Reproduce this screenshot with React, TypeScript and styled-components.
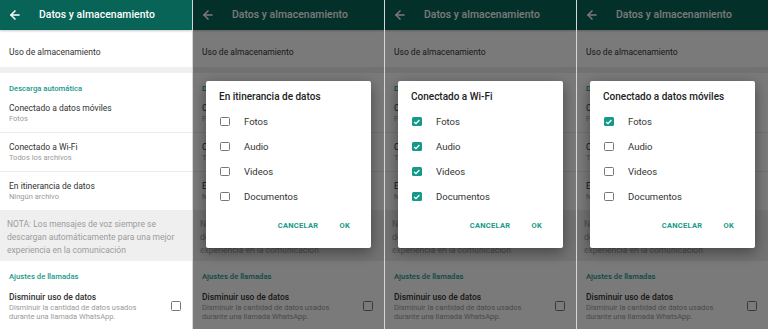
import React from "react";
import styled, { createGlobalStyle } from "styled-components";
import { ArrowLeft } from "lucide-react";

const GlobalStyle = createGlobalStyle`
  html, body { margin: 0; padding: 0; background: #dcdcdc; }
  body { font-family: Roboto, "Noto Sans", Arial, sans-serif; -webkit-font-smoothing: antialiased; }
  * { box-sizing: border-box; }
`;

const TEAL = "#17998a";

const Strip = styled.div`
  display: grid;
  grid-template-columns: 192px repeat(3, 191px);
  column-gap: 1px;
  width: 768px;
  height: 329px;
  overflow: hidden;
  background: #d6d6d6;
`;

const Phone = styled.div`
  position: relative;
  height: 329px;
  overflow: hidden;
  background: #fff;
`;

const Header = styled.header`
  position: relative;
  z-index: 1;
  height: 30px;
  display: flex;
  align-items: center;
  padding-left: 8px;
  background: #086457;
  color: #fff;
  box-shadow: 0 1px 2px rgba(0, 0, 0, 0.22);
`;

const HeaderTitle = styled.h1`
  margin: 0 0 0 17px;
  font-size: 10.4px;
  font-weight: 500;
  line-height: 14px;
  letter-spacing: 0.05px;
`;

const StorageRow = styled.div`
  padding: 16px 9px 9px;
  font-size: 8.5px;
  line-height: 12px;
  color: #333;
`;

const Band = styled.div`
  height: 6px;
  background: #efefef;
`;

const SectionTitle = styled.div`
  padding: 11px 9px 0;
  font-size: 7.7px;
  line-height: 10px;
  font-weight: 500;
  color: ${TEAL};
`;

const Item = styled.div<{ $last?: boolean }>`
  padding: 8px 9px;
  border-bottom: ${(p) => (p.$last ? "none" : "1px solid #ebebeb")};
`;

const ItemTitle = styled.div<{ $strong?: boolean }>`
  font-size: 8.5px;
  line-height: 12px;
  color: #333;
  font-weight: ${(p) => (p.$strong ? 500 : 400)};
`;

const ItemSub = styled.div`
  font-size: 7.5px;
  line-height: 10px;
  color: #9a9a9a;
`;

const Note = styled.div`
  background: #efefef;
  padding: 8px 8px 4px 7px;
  font-size: 8.5px;
  line-height: 13px;
  color: #9c9c9c;
`;

const ToggleRow = styled.div`
  display: flex;
  align-items: center;
  justify-content: space-between;
  padding: 9px 11px 0 9px;
`;

const ToggleText = styled.div`
  max-width: 140px;
`;

const ToggleSub = styled.div`
  font-size: 7.5px;
  line-height: 9px;
  color: #9a9a9a;
`;

const Box = styled.span<{ $checked?: boolean; $size: number }>`
  flex: none;
  width: ${(p) => p.$size}px;
  height: ${(p) => p.$size}px;
  border-radius: 1.5px;
  border: ${(p) => (p.$checked ? "none" : "1.5px solid #777")};
  background: ${(p) => (p.$checked ? TEAL : "transparent")};
  display: inline-flex;
  align-items: center;
  justify-content: center;
`;

const Scrim = styled.div`
  position: absolute;
  inset: 0;
  z-index: 2;
  background: rgba(0, 0, 0, 0.52);
  display: flex;
  align-items: center;
  justify-content: center;
`;

const Dialog = styled.div`
  width: 165px;
  background: #fff;
  border-radius: 2px;
  box-shadow: 0 4px 14px rgba(0, 0, 0, 0.4);
  padding: 9px 0 13px;
`;

const DialogTitle = styled.div`
  padding: 0 13px;
  font-size: 10px;
  line-height: 14px;
  font-weight: 500;
  color: #222;
`;

const Options = styled.div`
  margin-top: 5px;
`;

const Option = styled.div`
  height: 25px;
  display: flex;
  align-items: center;
  gap: 14.5px;
  padding-left: 14px;
  font-size: 9.5px;
  color: #333;
`;

const Actions = styled.div`
  margin-top: 6px;
  height: 20px;
  display: flex;
  justify-content: flex-end;
  align-items: center;
  gap: 11px;
  padding-right: 16px;
`;

const ActionButton = styled.button`
  background: none;
  border: none;
  padding: 0 5px;
  font-family: inherit;
  font-size: 7.5px;
  font-weight: 700;
  letter-spacing: 0.3px;
  color: ${TEAL};
`;

function Check({ checked, size }: { checked?: boolean; size: number }) {
  return (
    <Box $checked={checked} $size={size}>
      {checked && (
        <svg width={size} height={size} viewBox="0 0 10 10">
          <polyline points="2.3,5.2 4.2,7 7.8,3.2" fill="none" stroke="#fff" strokeWidth="1.4" />
        </svg>
      )}
    </Box>
  );
}

const items = [
  { title: "Conectado a datos móviles", sub: "Fotos" },
  { title: "Conectado a Wi-Fi", sub: "Todos los archivos" },
  { title: "En itinerancia de datos", sub: "Ningún archivo" },
];

const optionLabels = ["Fotos", "Audio", "Videos", "Documentos"];

type DialogSpec = { title: string; checked: boolean[] };

function Screen({ dialog }: { dialog?: DialogSpec }) {
  return (
    <Phone>
      <Header>
        <ArrowLeft size={14} strokeWidth={2.6} />
        <HeaderTitle>Datos y almacenamiento</HeaderTitle>
      </Header>
      <StorageRow>Uso de almacenamiento</StorageRow>
      <Band />
      <SectionTitle>Descarga automática</SectionTitle>
      {items.map((it, i) => (
        <Item key={it.title} $last={i === items.length - 1}>
          <ItemTitle>{it.title}</ItemTitle>
          <ItemSub>{it.sub}</ItemSub>
        </Item>
      ))}
      <Note>
        NOTA: Los mensajes de voz siempre se descargan automáticamente para una mejor experiencia en la comunicación
      </Note>
      <SectionTitle>Ajustes de llamadas</SectionTitle>
      <ToggleRow>
        <ToggleText>
          <ItemTitle $strong>Disminuir uso de datos</ItemTitle>
          <ToggleSub>Disminuir la cantidad de datos usados durante una llamada WhatsApp.</ToggleSub>
        </ToggleText>
        <Check size={10} />
      </ToggleRow>
      {dialog && (
        <Scrim>
          <Dialog>
            <DialogTitle>{dialog.title}</DialogTitle>
            <Options>
              {optionLabels.map((label, i) => (
                <Option key={label}>
                  <Check size={9.5} checked={dialog.checked[i]} />
                  <span>{label}</span>
                </Option>
              ))}
            </Options>
            <Actions>
              <ActionButton>CANCELAR</ActionButton>
              <ActionButton>OK</ActionButton>
            </Actions>
          </Dialog>
        </Scrim>
      )}
    </Phone>
  );
}

export default function App() {
  return (
    <>
      <GlobalStyle />
      <Strip>
        <Screen />
        <Screen dialog={{ title: "En itinerancia de datos", checked: [false, false, false, false] }} />
        <Screen dialog={{ title: "Conectado a Wi-Fi", checked: [true, true, true, true] }} />
        <Screen dialog={{ title: "Conectado a datos móviles", checked: [true, false, false, false] }} />
      </Strip>
    </>
  );
}
